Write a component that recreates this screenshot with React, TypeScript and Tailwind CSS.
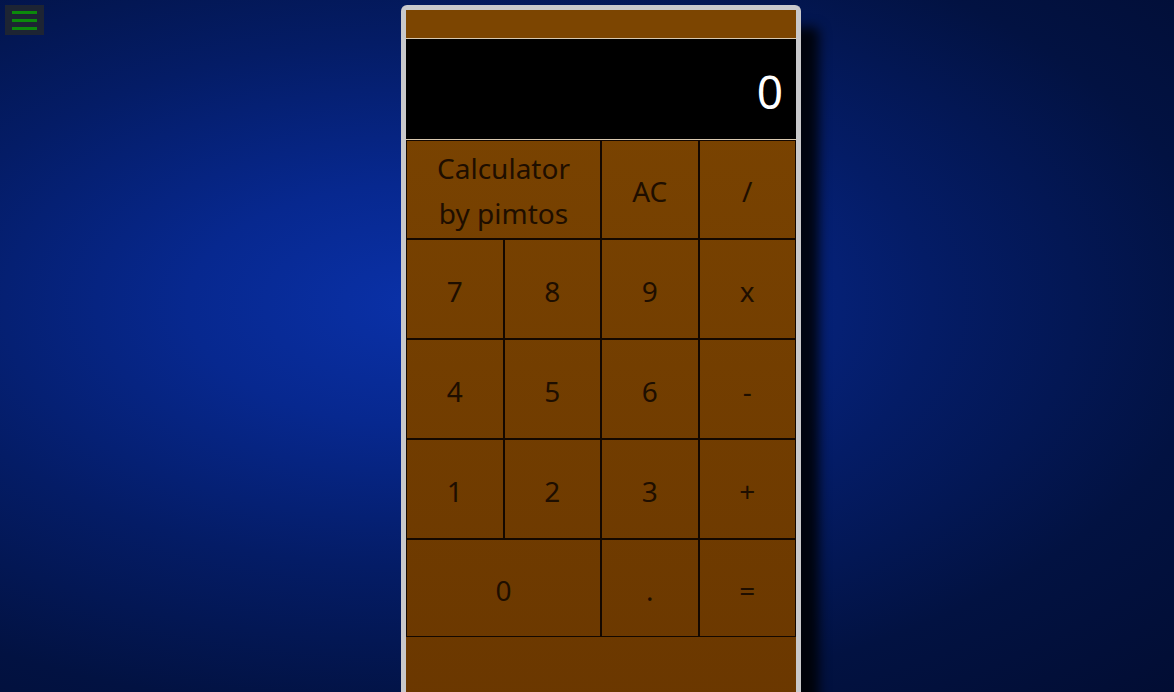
import React from "react";

const btn =
  "flex items-center justify-center border border-[#140800] text-[#1e0e00] text-[28px] leading-none pt-[3px]";

export default function App() {
  return (
    <div
      className="w-[1174px] h-[692px] overflow-hidden relative bg-[radial-gradient(ellipse_at_36%_44%,#0a31a8_0%,#07288f_22%,#041c66_48%,#021242_75%,#020d33_100%)]"
      style={{ fontFamily: '"Noto Sans", "Open Sans", sans-serif' }}
    >
      <div className="absolute left-[5px] top-[5px] w-[39px] h-[30px] bg-[#1d2433] flex flex-col items-center justify-center gap-[5px]">
        <div className="w-[25px] h-[3px] bg-[#0b8a0b]" />
        <div className="w-[25px] h-[3px] bg-[#0b8a0b]" />
        <div className="w-[25px] h-[3px] bg-[#0b8a0b]" />
      </div>

      <div className="flex justify-center pt-[5px]">
        <div className="ml-[28px] w-[400px] h-[720px] border-[5px] border-b-0 border-[#c9c9cb] rounded-t-[6px] shadow-[18px_22px_12px_rgba(0,0,0,0.85)] bg-[linear-gradient(180deg,#7c4501_0%,#6a3700_100%)] flex flex-col">
          <div className="h-[28px] bg-[#7c4501]" />
          <div className="h-[1px] bg-[#d8c8b0]" />
          <div className="h-[100px] bg-black flex items-center justify-end pr-[13px] pt-[4px]">
            <span className="text-white text-[46px] leading-none">0</span>
          </div>
          <div className="h-[1px] bg-[#d8c8b0]" />
          <div className="grid grid-cols-4 grid-rows-[99px_100px_100px_100px_98px]">
            <div className={`${btn} col-span-2 flex-col pt-[2px]`}>
              <span className="leading-[45px]">Calculator</span>
              <span className="leading-[45px]">by pimtos</span>
            </div>
            <div className={btn}>AC</div>
            <div className={btn}>/</div>
            <div className={btn}>7</div>
            <div className={btn}>8</div>
            <div className={btn}>9</div>
            <div className={btn}>x</div>
            <div className={btn}>4</div>
            <div className={btn}>5</div>
            <div className={btn}>6</div>
            <div className={btn}>-</div>
            <div className={btn}>1</div>
            <div className={btn}>2</div>
            <div className={btn}>3</div>
            <div className={btn}>+</div>
            <div className={`${btn} col-span-2`}>0</div>
            <div className={btn}>.</div>
            <div className={btn}>=</div>
          </div>
        </div>
      </div>
    </div>
  );
}
